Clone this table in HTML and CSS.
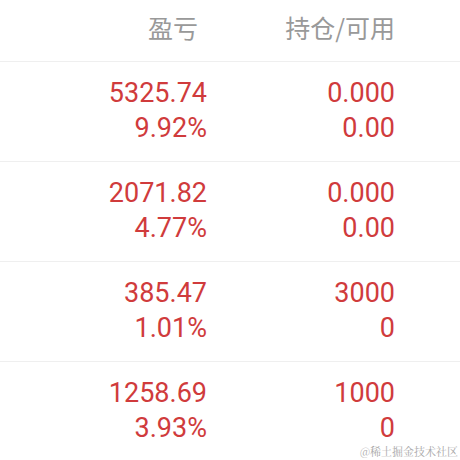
FILE: index.html
```html
<!DOCTYPE html>
<html>
<head>
<meta charset="utf-8">
<link rel="stylesheet" href="styles.css">
</head>
<body>
<div class="table">
  <div class="head">
    <div class="hcell hcell-pl">盈亏</div>
    <div class="hcell hcell-pos">持仓/可用</div>
  </div>
  <div class="row">
    <div class="cell cell-pl"><span>5325.74</span><span>9.92%</span></div>
    <div class="cell cell-pos"><span>0.000</span><span>0.00</span></div>
  </div>
  <div class="row">
    <div class="cell cell-pl"><span>2071.82</span><span>4.77%</span></div>
    <div class="cell cell-pos"><span>0.000</span><span>0.00</span></div>
  </div>
  <div class="row">
    <div class="cell cell-pl"><span>385.47</span><span>1.01%</span></div>
    <div class="cell cell-pos"><span>3000</span><span>0</span></div>
  </div>
  <div class="row">
    <div class="cell cell-pl"><span>1258.69</span><span>3.93%</span></div>
    <div class="cell cell-pos"><span>1000</span><span>0</span></div>
  </div>
</div>
<div class="watermark">@稀土掘金技术社区</div>
</body>
</html>
```
FILE: styles.css
```css
html, body {
  margin: 0;
  padding: 0;
  background: #ffffff;
  width: 460px;
  height: 460px;
  overflow: hidden;
  position: relative;
}
.table {
  display: flex;
  flex-direction: column;
}
.head {
  height: 61px;
  display: flex;
  justify-content: flex-end;
  align-items: center;
  padding-right: 65px;
  border-bottom: 1px solid #efefef;
  box-sizing: content-box;
}
.hcell {
  font-family: "Noto Sans CJK SC", "Noto Sans", sans-serif;
  font-size: 25px;
  color: #999999;
  text-align: right;
  line-height: 1;
  margin-top: -6px;
}
.hcell-pl {
  width: 197px;
}
.hcell-pos {
  width: 197px;
}
.row {
  height: 99px;
  display: flex;
  justify-content: flex-end;
  align-items: center;
  padding-right: 65px;
  border-bottom: 1px solid #efefef;
}
.cell {
  display: flex;
  flex-direction: column;
  align-items: flex-end;
  font-family: Roboto, "Liberation Sans", sans-serif;
  font-size: 27px;
  line-height: 35px;
  color: #d03b3c;
  margin-top: -1px;
}
.cell-pl {
  width: 207px;
}
.cell-pos {
  width: 188px;
}
.watermark {
  position: absolute;
  right: 2px;
  bottom: 2px;
  font-family: "Noto Serif CJK SC", "Noto Sans CJK SC", serif;
  font-size: 11px;
  line-height: 14px;
  color: #a8a8a8;
}
```
